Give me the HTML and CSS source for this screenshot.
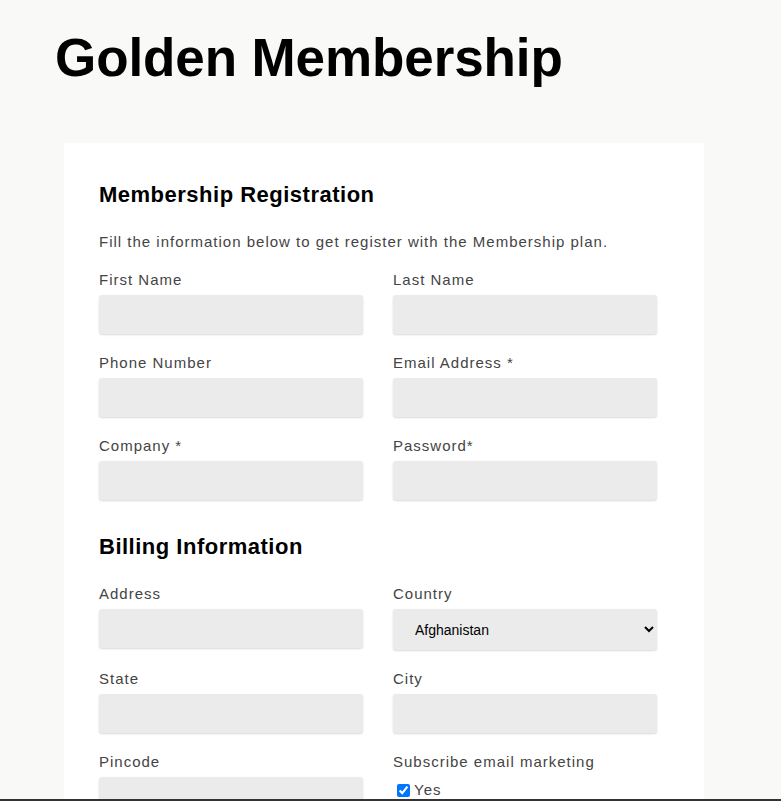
FILE: index.html
```html
<!DOCTYPE html>
<html lang="en">
<head>
    <meta charset="UTF-8">
    <meta name="viewport" content="width=device-width, initial-scale=1.0">
    <title>Golden Membership</title>
    <link rel="stylesheet" href="styles.css">
</head>
<body>
    <div class="page">
        <h1>Golden Membership</h1>
        <div class="card">
            <h2>Membership Registration</h2>
            <p class="intro">Fill the information below to get register with the Membership plan.</p>
            <form class="grid">
                <div class="field">
                    <label for="first">First Name</label>
                    <input type="text" id="first">
                </div>
                <div class="field">
                    <label for="last">Last Name</label>
                    <input type="text" id="last">
                </div>
                <div class="field">
                    <label for="phone">Phone Number</label>
                    <input type="text" id="phone">
                </div>
                <div class="field">
                    <label for="email">Email Address *</label>
                    <input type="email" id="email">
                </div>
                <div class="field">
                    <label for="company">Company *</label>
                    <input type="text" id="company">
                </div>
                <div class="field">
                    <label for="password">Password*</label>
                    <input type="password" id="password">
                </div>

                <h2 class="section">Billing Information</h2>

                <div class="field">
                    <label for="address">Address</label>
                    <input type="text" id="address">
                </div>
                <div class="field">
                    <label for="country">Country</label>
                    <select id="country">
                        <option>Afghanistan</option>
                        <option>Albania</option>
                        <option>Algeria</option>
                    </select>
                </div>
                <div class="field">
                    <label for="state">State</label>
                    <input type="text" id="state">
                </div>
                <div class="field">
                    <label for="city">City</label>
                    <input type="text" id="city">
                </div>
                <div class="field">
                    <label for="pincode">Pincode</label>
                    <input type="text" id="pincode">
                </div>
                <div class="field">
                    <label>Subscribe email marketing</label>
                    <label class="check"><input type="checkbox" checked> Yes</label>
                </div>
            </form>
        </div>
    </div>
    <div class="footer"></div>
</body>
</html>
```

FILE: styles.css
```css
body {
    margin: 0;
    background: #f9f9f7;
    font-family: "Liberation Sans", Arial, sans-serif;
    color: #444;
}
.page {
    padding: 27px 0 0 55px;
}
h1 {
    margin: 0 0 55px;
    font-size: 53px;
    line-height: 61px;
    color: #000;
    letter-spacing: -0.1px;
}
.card {
    width: 570px;
    margin-left: 9px;
    padding: 39px 35px 40px;
    background: #fff;
}
h2 {
    margin: 0;
    font-size: 22px;
    line-height: 26px;
    color: #000;
    letter-spacing: 0.5px;
}
.intro {
    margin: 24px 0 18px;
    font-size: 15px;
    line-height: 20px;
    letter-spacing: 1px;
}
.grid {
    display: grid;
    grid-template-columns: 264px 264px;
    column-gap: 30px;
    row-gap: 19px;
}
.section {
    grid-column: 1 / -1;
    margin: 15px 0 5px;
}
.field label {
    display: block;
    margin-bottom: 5px;
    font-size: 15px;
    line-height: 20px;
    letter-spacing: 1px;
}
.field input,
.field select {
    display: block;
    box-sizing: border-box;
    width: 100%;
    height: 39px;
    border: none;
    border-radius: 3px;
    background: #ebebeb;
    box-shadow: 0 1px 2px rgba(0, 0, 0, 0.15);
}
.field select {
    height: 41px;
    padding: 0 6px 0 18px;
    font-family: "Liberation Sans", Arial, sans-serif;
    font-size: 14px;
    color: #000;
}
.field .check {
    display: flex;
    align-items: center;
    margin: 0;
    padding-top: 3px;
    font-size: 15px;
    letter-spacing: 1px;
}
.field .check input {
    width: 13px;
    height: 13px;
    margin: 0 4px 0 4px;
    box-shadow: none;
}
.footer {
    position: fixed;
    left: 0;
    right: 0;
    bottom: 0;
    height: 2px;
    background: #2f3438;
}
```
